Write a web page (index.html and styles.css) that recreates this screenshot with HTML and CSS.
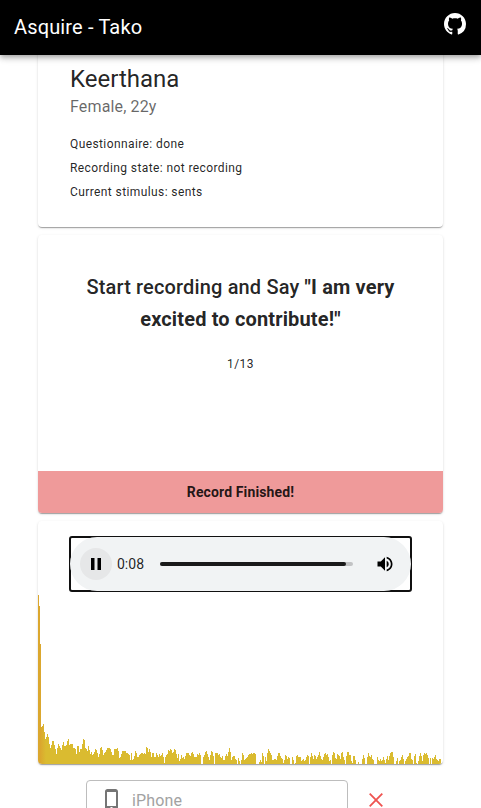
FILE: index.html
```html
<!DOCTYPE html>
<html lang="en">
<head>
<meta charset="utf-8">
<title>Asquire - Tako</title>
<link rel="stylesheet" href="styles.css">
</head>
<body>
<header class="appbar">
  <h1 class="brand">Asquire - Tako</h1>
  <svg class="github" viewBox="0 0 16 16" aria-label="GitHub"><path d="M8 0C3.58 0 0 3.58 0 8c0 3.54 2.29 6.53 5.47 7.59.4.07.55-.17.55-.38 0-.19-.01-.82-.01-1.49-2.01.37-2.53-.49-2.69-.94-.09-.23-.48-.94-.82-1.13-.28-.15-.68-.52-.01-.53.63-.01 1.08.58 1.23.82.72 1.21 1.87.87 2.33.66.07-.52.28-.87.51-1.07-1.78-.2-3.64-.89-3.64-3.95 0-.87.31-1.59.82-2.15-.08-.2-.36-1.02.08-2.12 0 0 .67-.21 2.2.82.64-.18 1.32-.27 2-.27s1.36.09 2 .27c1.53-1.04 2.2-.82 2.2-.82.44 1.1.16 1.92.08 2.12.51.56.82 1.27.82 2.15 0 3.07-1.87 3.75-3.65 3.95.29.25.54.73.54 1.48 0 1.07-.01 1.93-.01 2.2 0 .21.15.46.55.38A8.01 8.01 0 0 0 16 8c0-4.42-3.58-8-8-8z"/></svg>
</header>
<main class="content">
  <section class="card profile">
    <h2 class="name">Keerthana</h2>
    <p class="details">Female, 22y</p>
    <ul class="status">
      <li>Questionnaire: done</li>
      <li>Recording state: not recording</li>
      <li>Current stimulus: sents</li>
    </ul>
  </section>
  <section class="card stimulus">
    <p class="prompt">Start recording and Say <b>"I am very</b><br><b>excited to contribute!"</b></p>
    <p class="progress">1/13</p>
    <button class="record">Record Finished!</button>
  </section>
  <section class="card playback">
    <div class="player">
      <div class="player-body">
        <button class="pause" aria-label="Pause"><svg viewBox="0 0 12 12"><path d="M1 0h3.500v12H1zM7.500 0H11v12H7.500z"/></svg></button>
        <span class="time">0:08</span>
        <div class="track"><div class="played"></div></div>
        <svg class="volume" viewBox="0 0 24 24"><path d="M3 9v6h4l5 5V4L7 9H3zm13.500 3A4.500 4.500 0 0 0 14 7.970v8.050c1.480-.73 2.500-2.250 2.500-4.020zM14 3.230v2.060c2.890.86 5 3.540 5 6.710s-2.110 5.850-5 6.710v2.060c4.010-.91 7-4.490 7-8.770s-2.990-7.860-7-8.770z"/></svg>
      </div>
    </div>
    <svg class="spectrum" viewBox="0 0 405 170" shape-rendering="crispEdges">
      <defs><linearGradient id="level" gradientUnits="userSpaceOnUse" x1="0" y1="0" x2="8" y2="0"><stop offset=".3" stop-color="#dba72e"/><stop offset="1" stop-color="#dabb30"/></linearGradient></defs>
      <path class="bars" id="bars" fill="url(#level)"/>
    </svg>
  </section>
  <div class="device-row">
    <div class="device">
      <svg class="phone" viewBox="0 0 24 24"><path d="M15.500 1h-8C6.120 1 5 2.120 5 3.500v17C5 21.880 6.120 23 7.500 23h8c1.380 0 2.500-1.120 2.500-2.500v-17C18 2.120 16.880 1 15.500 1zm-4 21c-.83 0-1.500-.67-1.500-1.500s.67-1.500 1.500-1.500 1.500.67 1.500 1.500-.67 1.500-1.500 1.500zm4.500-4H7V4h9v14z"/></svg>
      <span>iPhone</span>
    </div>
    <svg class="remove" viewBox="0 0 14 14"><path d="M.7.7l12.600 12.600M13.300.7L.7 13.300"/></svg>
  </div>
</main>
<script src="spectrum.js"></script>
</body>
</html>
```
FILE: styles.css
```css
* { box-sizing: border-box; }
html, body { height: 100%; overflow: hidden; }
body {
  margin: 0;
  display: flex;
  flex-direction: column;
  background: #fff;
  color: rgba(0, 0, 0, .87);
  font-family: Roboto, "Liberation Sans", sans-serif;
}
h1, h2, p, ul { margin: 0; padding: 0; font-weight: 400; }
button { border: 0; padding: 0; font-family: inherit; color: inherit; }
svg { display: block; }

.appbar {
  position: relative;
  z-index: 2;
  flex: none;
  height: 55px;
  padding: 0 15px 0 14px;
  display: flex;
  align-items: center;
  justify-content: space-between;
  background: #000;
  color: #fff;
  box-shadow: 0 2px 4px -1px rgba(0,0,0,.2), 0 4px 5px 0 rgba(0,0,0,.14), 0 1px 10px 0 rgba(0,0,0,.12);
}
.brand { margin-bottom: 2px; font-size: 20px; line-height: 32px; letter-spacing: .15px; }
.github { width: 22px; height: 22px; margin-bottom: 7px; fill: #fff; }

.content {
  width: 405px;
  margin-left: 38px;
  display: flex;
  flex-direction: column;
  gap: 8px;
}
.card {
  flex: none;
  overflow: hidden;
  border-radius: 4px;
  background: #fff;
  box-shadow: 0 2px 1px -1px rgba(0,0,0,.2), 0 1px 1px 0 rgba(0,0,0,.14), 0 1px 3px 0 rgba(0,0,0,.12);
}
.profile { height: 180px; margin-top: -8px; padding: 16px 32px; }
.name { font-size: 24px; line-height: 32px; }
.details { font-size: 16px; line-height: 24px; letter-spacing: .15px; color: rgba(0,0,0,.6); }
.status { margin-top: 13px; list-style: none; font-size: 12px; line-height: 24px; letter-spacing: .4px; }

.stimulus { height: 278px; padding-top: 36px; display: flex; flex-direction: column; text-align: center; }
.prompt { padding: 0 32px; font-size: 20px; font-weight: 500; line-height: 32px; letter-spacing: .15px; }
.prompt b { font-weight: 700; }
.progress { margin-top: 17px; font-size: 12px; line-height: 24px; letter-spacing: .4px; }
.record { height: 42px; margin-top: auto; background: #ef9a9a; font-size: 14px; font-weight: 700; letter-spacing: .13px; }

.playback { height: 243px; display: flex; flex-direction: column; }
.player {
  flex: none;
  width: 343px;
  height: 56px;
  margin: 15px 31px 0;
  border: 2px solid #101010;
  border-radius: 3px;
}
.player-body {
  height: 54px;
  margin: -1px;
  padding: 0 16px 0 10px;
  display: flex;
  align-items: center;
  border-radius: 27px;
  background: #f1f3f4;
}
.pause { width: 32px; height: 32px; display: grid; place-items: center; border-radius: 50%; background: #e6e7e8; }
.pause svg { width: 12px; height: 12px; }
.time { width: 48px; padding-left: 5px; font-size: 14px; }
.track { width: 193px; height: 4px; border-radius: 2px; background: #c2c3c4; }
.played { width: 186px; height: 4px; border-radius: 2px; background: #1a1a1a; }
.volume { width: 20px; height: 20px; margin-left: auto; }
.spectrum { flex: none; width: 405px; height: 170px; margin-top: auto; }

.device-row { display: flex; align-items: flex-start; margin: 8px 0 0 48px; }
.device {
  width: 262px;
  height: 40px;
  padding-left: 13px;
  display: flex;
  align-items: center;
  gap: 8px;
  border: 1px solid #bdbdbd;
  border-radius: 4px;
  font-size: 16px;
  letter-spacing: .15px;
  color: #a2a2a2;
}
.phone { width: 24px; height: 24px; fill: #757575; }
.remove { width: 14px; height: 14px; margin: 13px 0 0 21px; fill: none; stroke: #ef5350; stroke-width: 1.8; }
```
FILE: spectrum.js
```js
// Bar heights in pixels, one bar per pixel, each run keyed by its first x.
const runs = {
  0: [169,158,120,37,38,40,32,25,27,30,27,20,16,19,23,23,19,15,10,16,20,18,16,14,19,22,18,18,19,23,25,19,20,20,20,16,16,15,10,18,18,12,15,15,20,25,24,16,15,13,18,14,10,12,9,10,12,15,14,11,7,10,16,17,14,9,11,12,14,16,16,16,15,12,9,9,15,15,15,16,13,6,7,10,13,13,13,13,11,11,10,9],
  92: [4,11,4,5,8,13,11,7,7,9,10,11,11,10,11,10,17,16,12,15,12,7,11,11,7,7,11,9,7,10,8,9,11,7,1,7,9,10,14,13,15,14,11,12,15,14,10,6,10,3,5,9,6,7,5,8,11,11,11,9,8,11,12,10,7,7,7,10,9,11,9,0,0,7,9,12,13,10,7,4,9,13,12,8,0,11,11,11,9,10,7,6,8,4,4,8,10,8,12,16,12,4,7,8,8],
  197: [5,4,0,6,3,0,4,11,9,4,5,6,7,9,10,10,11,10,11,11,10,0,0,0,2,4,2,11,8,0,7,3,11,15,13,11,9,4,4,5,5,4,8,11,11,8,6,5,1,4,9,8,5,7,6,0,0,7,4,0,1,8,9,7,7,7,3,4,5,3,4,7,9,8,0,7,11,8,5,9,8,5,7,9,12,8,5,4,7,10,11,9,10,7,3,4,0,9,12,11,6,5,10,9,8],
  302: [5,11,12,7,4,0,8,12,12,9,9,3,1,8,8,4,0,0,2,0,0,0,5,9,6,0,0,7,11,8,7,9,5,4,0,0,0,7,4,3,5,3,4,7,4,1,5,8,4,8,11,12,12,7,0,0,3,6,0,3,4,7,9,5,0,3,5,7,8,11,11,5,4,0,8,10,1,0,3,8,11,8,3,9,11,10,11,9,6,0,6,0,6,5,7,9,5,4,3,5,5]
};
let d = "";
for (const [start, heights] of Object.entries(runs)) {
  heights.forEach((h, i) => {
    if (h) d += `M${+start + i} ${170 - h}h1v${h}h-1z`;
  });
}
document.getElementById("bars").setAttribute("d", d);
```
